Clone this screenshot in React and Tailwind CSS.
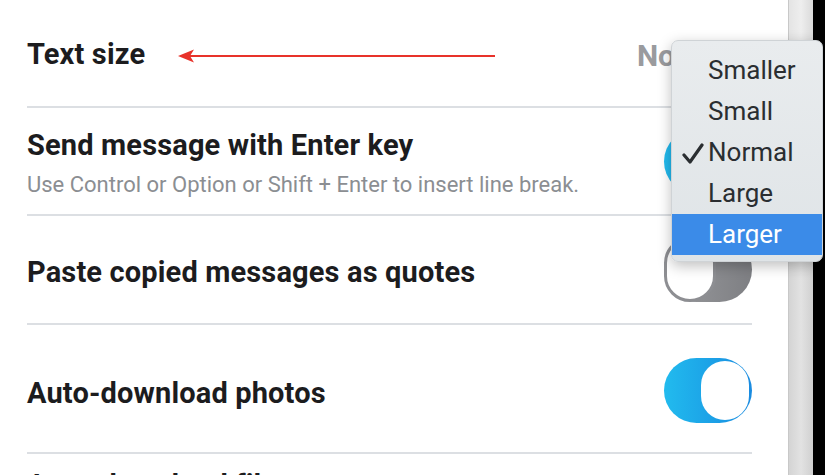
/**
 * Settings panel — chat preferences with the text size menu open
 */

const SIZES = ['Smaller', 'Small', 'Normal', 'Large', 'Larger'];

const font = { fontFamily: 'Roboto, Inter, "Noto Sans", sans-serif' };

const title = 'text-[29px] font-bold text-[#1c1c1e] tracking-[0.15px]';

export default function App() {
  return (
    <div className="relative flex w-[825px] h-[475px] overflow-hidden bg-white" style={font}>
      {/* Settings list */}
      <div className="flex-1 pl-[27px] pr-[36px]">
        <div className="h-[108px] flex items-center border-b-2 border-[#dcdfe3] pt-[4px]">
          <span className={title}>Text size</span>
          <ArrowLeft />
          <span className="ml-auto mr-[16px] text-[30px] font-bold text-[#9a9b9e]">Normal</span>
        </div>

        <div className="h-[108px] flex items-center border-b-2 border-[#dcdfe3]">
          <div className="flex-1 pt-[4px]">
            <div className={`${title} leading-[32px]`}>Send message with Enter key</div>
            <div className="text-[22px] text-[#8b8e92] leading-[26px] mt-[11px]">
              Use Control or Option or Shift + Enter to insert line break.
            </div>
          </div>
          <Toggle on />
        </div>

        <div className="h-[109px] flex items-center border-b-2 border-[#dcdfe3] pt-[6px]">
          <span className={`flex-1 ${title}`}>Paste copied messages as quotes</span>
          <div className="-mt-[6px]">
            <Toggle />
          </div>
        </div>

        <div className="h-[129px] flex items-center border-b-2 border-[#dcdfe3] pt-[10px]">
          <span className={`flex-1 ${title}`}>Auto-download photos</span>
          <div className="-mt-[6px]">
            <Toggle on />
          </div>
        </div>

        <div className="pt-[11px] leading-[40px]">
          <span className={title}>Auto-download files</span>
        </div>
      </div>

      {/* Scrollbar + window edge */}
      <div className="w-[25px] flex flex-col bg-gradient-to-r from-[#d4d4d4] via-[#e2e2e2] to-[#d0d0d0] border-l border-[#c8c8c8]">
        <div className="h-[40px] bg-gradient-to-r from-[#e4e4e4] via-[#eeeeee] to-[#dadada]" />
      </div>
      <div className="w-[12px] bg-black" />

      {/* Open menu */}
      <div className="absolute left-[671px] top-[40px] w-[152px] h-[222px] rounded-[7px] bg-gradient-to-b from-[#e9ecee] to-[#dfe4e7] border border-[#cfd3d6] shadow-[0_4px_14px_rgba(0,0,0,0.25)] overflow-hidden pt-[9px]">
        {SIZES.map((s) => {
          const active = s === 'Larger';
          return (
            <div
              key={s}
              className={`relative h-[41px] flex items-center pl-[36px] text-[26px] ${
                active ? 'bg-[#3b8be8] text-white' : 'text-[#2a2e31]'
              }`}
            >
              {s === 'Normal' && (
                <svg className="absolute left-[10px] top-[11px]" width="22" height="21" viewBox="0 0 22 21">
                  <path d="M2 12 L8 19 L20 2" fill="none" stroke="#2a2e31" strokeWidth="3.2" strokeLinecap="round" strokeLinejoin="round" />
                </svg>
              )}
              {s}
            </div>
          );
        })}
      </div>
    </div>
  );
}

function ArrowLeft() {
  return (
    <svg className="ml-[33px] mt-[2px]" width="318" height="14" viewBox="0 0 318 14">
      <path d="M0 7 L16 0.5 L12 7 L16 13.5 Z" fill="#e8322a" />
      <line x1="12" y1="7" x2="317" y2="7" stroke="#e8322a" strokeWidth="2.2" />
    </svg>
  );
}

function Toggle({ on }) {
  if (on) {
    return (
      <div className="w-[88px] h-[65px] rounded-full bg-gradient-to-r from-[#22bbee] to-[#1a8be0] p-[3px] flex justify-end">
        <div className="w-[48px] h-full rounded-full bg-white" />
      </div>
    );
  }
  return (
    <div className="w-[88px] h-[65px] rounded-full bg-gradient-to-r from-[#9a9b9e] to-[#7e7f83] flex">
      <div className="w-[52px] h-full rounded-full bg-white border-[3px] border-[#8d8e92]" />
    </div>
  );
}
